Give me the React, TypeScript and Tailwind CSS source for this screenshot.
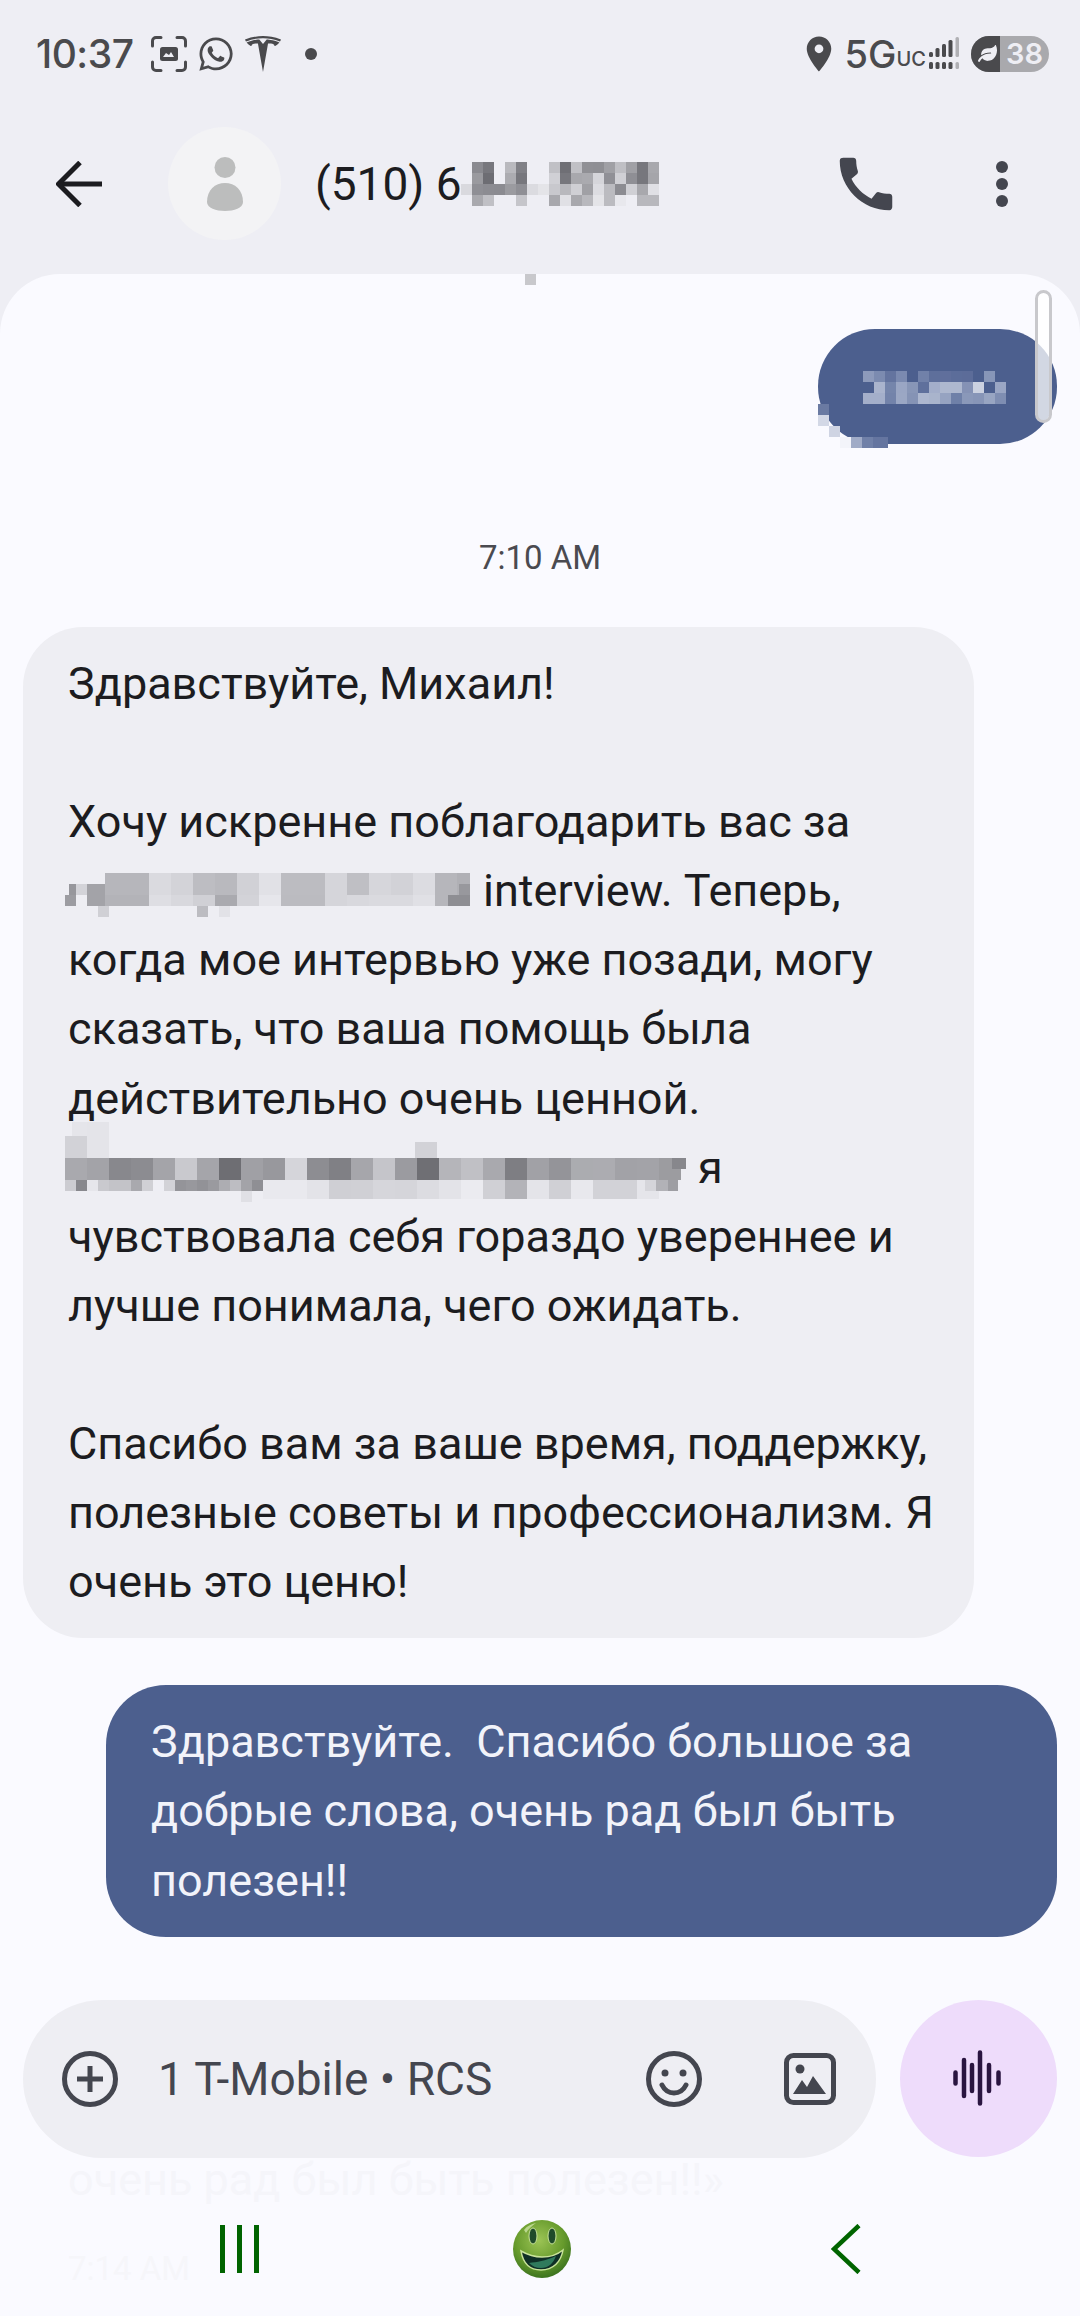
import React from 'react'
import { FaWhatsapp, FaLeaf } from 'react-icons/fa'
import { SiTesla } from 'react-icons/si'
import { MdCall, MdLocationOn } from 'react-icons/md'

type Cell = [number, number, number, number, string]

// censored areas of the screenshot, [x, y, w, h, colour] in page pixels
const row = (x: number, y: number, w: number, h: number, colors: string[]): Cell[] =>
  colors.map((c, i) => [x + i * w, y, w, h, c] as Cell)

const nameCells: Cell[] = [
  ...row(461, 163, 11, 11, ['#eeeef4', '#8a8a90', '#77777d', '#eeeef4', '#b9b9be', '#808086', '#eeeef4', '#eeeef4', '#c0c0c5', '#6f6f75', '#c0c0c5', '#909095', '#8f8f94', '#a0a0a5', '#bfbfc4', '#a0a0a5', '#77777d', '#a8a8ad']),
  ...row(461, 174, 11, 11, ['#eeeef4', '#9a9a9f', '#6d6d73', '#eeeef4', '#acacb1', '#77777d', '#eeeef4', '#eeeef4', '#d0d0d5', '#77777d', '#a8a8ad', '#aaaaaf', '#d5d5da', '#909096', '#d0d0d5', '#8f8f95', '#77777d', '#a5a5aa']),
  ...row(461, 185, 11, 11, ['#d9d9de', '#8f8f95', '#8c8c92', '#8b8b91', '#9b9ba0', '#8f8f95', '#dbdbe0', '#e4e4e8', '#c8c8cd', '#b8b8bd', '#cfcfd4', '#a0a0a5', '#dcdce1', '#bbbbc0', '#8c8c92', '#d0d0d5', '#a8a8ad', '#e0e0e5']),
  ...row(461, 196, 11, 11, ['#eeeef4', '#a9a9ae', '#c0c0c5', '#eeeef4', '#eeeef4', '#c5c5ca', '#eeeef4', '#eeeef4', '#a8a8ad', '#e0e0e5', '#a8a8ad', '#b8b8bd', '#e4e4e8', '#bbbbc0', '#e8e8ed', '#eeeef4', '#b8b8bd', '#b8b8bd']),
]

const smsCells: Cell[] = [
  ...row(863, 371, 11, 11, ['#8d9abb', '#7c8bb0', '#64749f', '#7b8ab0', '#4c5f8e', '#7181a9', '#5e6f9b', '#606f9c', '#5c6d9a', '#5c6c99', '#4c5f8e', '#8796b8', '#4c5f8e']),
  ...row(863, 382, 11, 11, ['#4c5f8e', '#aab4cd', '#7585ab', '#9aa6c4', '#8896b7', '#5f709c', '#a3aeca', '#aeb8cf', '#aeb8cf', '#8592b5', '#cbd1e0', '#4c5f8e', '#9aa6c4']),
  ...row(863, 393, 11, 11, ['#a4afca', '#a4afca', '#7383aa', '#9ba7c4', '#8593b5', '#adb7cf', '#a9b4cc', '#96a3c1', '#6f80a8', '#8a98b9', '#8795b7', '#98a5c2', '#7f8eb2']),
]

const smsCorner: Cell[] = [
  [818, 404, 11, 11, '#6a7aa2'],
  [818, 415, 11, 11, '#d3d8e6'],
  [818, 426, 11, 22, '#fafaff'],
  [829, 426, 11, 11, '#cfd4e3'],
  [829, 437, 11, 11, '#fafaff'],
  [840, 437, 11, 11, '#f3f4fa'],
  [851, 437, 11, 11, '#a0abc7'],
  [862, 437, 11, 11, '#7080a8'],
  [873, 437, 15, 11, '#6575a0'],
]

const firstCells: Cell[] = [
  ...row(105, 874, 22, 22, ['#b6b6bb', '#b6b6bb', '#dadadf', '#d3d3d8', '#bdbdc2', '#b9b9be', '#d1d1d6', '#e1e1e6', '#bcbcc1', '#bcbcc1', '#d5d5da', '#bfbfc4', '#d6d6db', '#d2d2d7', '#dcdce1', '#b6b6bb', '#b0b0b5']),
  ...row(105, 896, 22, 11, ['#b3b3b8', '#b3b3b8', '#dedee3', '#d8d8dd', '#d0d0d5', '#aaaaaf', '#d3d3d8', '#e6e6eb', '#bbbbc0', '#bbbbc0', '#d5d5da', '#d8d8dd', '#dadadf', '#dadadf', '#e0e0e5', '#b6b6bb', '#c2c2c7']),
  [65, 896, 11, 11, '#9c9ca1'],
  [69, 885, 7, 11, '#97979c'],
  [76, 885, 11, 11, '#d3d3d8'],
  [87, 885, 18, 22, '#a3a3a8'],
  [98, 907, 11, 11, '#d0d0d5'],
  [197, 907, 11, 11, '#bcbcc1'],
  [219, 907, 11, 11, '#e2e2e7'],
  [459, 885, 11, 11, '#98989d'],
  [448, 896, 22, 11, '#8e8e93'],
]

const secondCells: Cell[] = [
  [65, 1136, 22, 22, '#d2d2d7'],
  [87, 1122, 22, 36, '#e4e4e9'],
  [72, 1122, 15, 14, '#e5e5ea'],
  [415, 1142, 22, 16, '#d2d2d7'],
  ...row(65, 1158, 22, 22, ['#a9a9ae', '#a3a3a8', '#88888d', '#8c8c91', '#a4a4a9', '#c9c9ce', '#a5a5aa', '#6e6e73', '#a0a0a5', '#98989d', '#d5d5da', '#8d8d92', '#808085', '#a6a6ab', '#c5c5ca', '#9b9ba0', '#6f6f74', '#b5b5ba', '#c0c0c5', '#a9a9ae', '#7e7e83', '#a1a1a6', '#949499', '#abacb0', '#acacb1', '#a2a2a7', '#a3a3a8', '#9c9ca0']),
  [672, 1158, 14, 11, '#87878c'],
  ...row(65, 1180, 11, 11, ['#ccccd1', '#88888d', '#e6e6eb', '#c9c9ce', '#c3c3c8', '#c3c3c8', '#a9a9ae', '#d0d0d5', '#eeeef4', '#d2d2d7', '#949499', '#98989d', '#929297', '#9a9a9f', '#adadb2', '#bdbdc2', '#a3a3a8', '#8f8f94']),
  [241, 1191, 11, 11, '#e0e0e5'],
  ...row(263, 1180, 22, 19, ['#e9e9ee', '#e9e9ee', '#e3e3e8', '#cfcfd4', '#d0d0d5', '#d6d6db', '#d5d5da', '#dcdce1', '#e3e3e8', '#ebebf0', '#d0d0d5', '#b3b3b8', '#e4e4e9', '#d0d0d5', '#e8e8ed', '#d2d2d7', '#d2d2d7', '#e5e5ea']),
  [645, 1180, 11, 11, '#d5d5da'],
  [656, 1180, 12, 11, '#b2b2b7'],
  [668, 1180, 10, 11, '#9e9ea3'],
]

const Mosaic = ({ cells, x, y, w, h, className }: { cells: Cell[]; x: number; y: number; w: number; h: number; className?: string }) => (
  <svg width={w} height={h} viewBox={`${x} ${y} ${w} ${h}`} shapeRendering="crispEdges" className={className}>
    {cells.map(([cx, cy, cw, ch, fill], i) => (
      <rect key={i} x={cx} y={cy} width={cw} height={ch} fill={fill} />
    ))}
  </svg>
)

const StatusBar = () => (
  <div className="flex h-[105px] shrink-0 items-center justify-between pl-[36px] pr-[31px] pt-[2px] font-['Inter',sans-serif] text-[#4a4a4d]">
    <div className="flex items-center">
      <span className="text-[39px] font-medium leading-none tracking-[-0.5px]">10:37</span>
      <svg width="36" height="36" viewBox="0 0 36 36" fill="none" className="ml-[18px]">
        <path d="M1.5 10V5a3.500 3.500 0 0 1 3.500-3.500h5M26 1.500h5A3.500 3.500 0 0 1 34.500 5v5M34.500 26v5a3.500 3.500 0 0 1-3.500 3.500h-5M10 34.500H5A3.500 3.500 0 0 1 1.500 31v-5" stroke="#4a4a4d" strokeWidth="3" strokeLinecap="round" />
        <rect x="9" y="11" width="18" height="14" rx="2.500" fill="#4a4a4d" />
        <path d="M12 21l3-4 3 2 2-3 3 5z" fill="#eeeef4" />
      </svg>
      <FaWhatsapp size={38} className="ml-[10px]" />
      <SiTesla size={36} className="ml-[10px]" />
      <div className="ml-[24px] h-[12px] w-[12px] rounded-full bg-[#4a4a4d]" />
    </div>
    <div className="flex items-center">
      <MdLocationOn size={42} className="mr-[5px]" />
      <span className="text-[38px] font-medium leading-none">5G</span>
      <span className="mt-[10px] text-[20px] font-medium leading-none">UC</span>
      <svg width="32" height="34" viewBox="0 0 32 34" className="ml-[3px]">
        <g fill="#4a4a4d">
          <rect x="0" y="15" width="4" height="5" rx="1.500" />
          <rect x="6.500" y="11" width="4" height="9" rx="1.500" />
          <rect x="13" y="7" width="4" height="13" rx="1.500" />
          <rect x="19.500" y="3" width="4" height="17" rx="1.500" />
          <rect x="0" y="25" width="4" height="7" rx="1.500" />
          <rect x="6.500" y="25" width="4" height="7" rx="1.500" />
          <rect x="13" y="25" width="4" height="7" rx="1.500" />
          <rect x="19.500" y="25" width="4" height="7" rx="1.500" />
        </g>
        <rect x="26.500" y="0" width="3.500" height="20" rx="1.500" fill="#b0b0b4" />
        <rect x="26.500" y="25" width="3.500" height="7" rx="1.500" fill="#b0b0b4" />
      </svg>
      <div className="ml-[10px] flex h-[36px] w-[78px] overflow-hidden rounded-full bg-[#a9a9ad]">
        <div className="flex w-[29px] items-center justify-center bg-[#4a4a4d] pl-[3px]">
          <FaLeaf size={19} className="text-[#eeeef4]" />
        </div>
        <span className="flex-1 text-center text-[29px] font-semibold leading-[36px] text-[#eeeef4]">38</span>
      </div>
    </div>
  </div>
)

const Header = () => (
  <div className="mb-[12px] flex h-[157px] shrink-0 items-center pr-[72px]">
    <svg width="46" height="46" viewBox="0 0 46 46" fill="none" className="ml-[56px]" stroke="#1c1c20" strokeWidth="5">
      <path d="M46 23H3" />
      <path d="M24 1.500L2.500 23 24 44.500" />
    </svg>
    <div className="ml-[66px] flex h-[113px] w-[113px] items-center justify-center rounded-full bg-[#f3f3f5]">
      <svg width="38" height="54" viewBox="0 0 38 54" fill="#bcbdbd">
        <ellipse cx="19" cy="10.500" rx="10.500" ry="10.500" />
        <path d="M19 26c10 0 18 7 18 19 0 6-9 9-18 9S1 51 1 45c0-12 8-19 18-19z" />
      </svg>
    </div>
    <span className="ml-[34px] w-[146px] shrink-0 whitespace-nowrap text-[46px] leading-none text-[#1c1c20]">(510) 6</span>
    <Mosaic cells={nameCells} x={461} y={163} w={198} h={44} className="shrink-0" />
    <MdCall size={70} className="ml-auto text-[#44464f]" />
    <div className="ml-[95px] flex flex-col gap-[5px]">
      <div className="h-[12px] w-[12px] rounded-full bg-[#44464f]" />
      <div className="h-[12px] w-[12px] rounded-full bg-[#44464f]" />
      <div className="h-[12px] w-[12px] rounded-full bg-[#44464f]" />
    </div>
  </div>
)

const Smiley = () => (
  <svg width="60" height="60" viewBox="0 0 60 60">
    <defs>
      <radialGradient id="ball" cx="45%" cy="35%" r="65%">
        <stop offset="0%" stopColor="#9cc455" />
        <stop offset="65%" stopColor="#669a2c" />
        <stop offset="100%" stopColor="#3d7420" />
      </radialGradient>
    </defs>
    <circle cx="30" cy="30" r="29" fill="url(#ball)" />
    <path d="M12 11c3-4 7-6 12-7-4 3-8 6-10 10z" fill="#d5ebb0" opacity="0.7" />
    <ellipse cx="21" cy="17" rx="4" ry="8" fill="#1f4a2a" stroke="#c8e39a" strokeWidth="1" />
    <ellipse cx="40" cy="17" rx="4" ry="8" fill="#1f4a2a" stroke="#c8e39a" strokeWidth="1" />
    <path d="M9 32c7 4 13 6 21 6s15-2 21-7c-2 12-10 20-22 20S11 44 9 32z" fill="#0f2f26" stroke="#c8e39a" strokeWidth="1.500" />
    <path d="M17 44c8-1 16-2 27-7-3 8-8 12-15 12-5 0-9-2-12-5z" fill="#2f7a5c" />
  </svg>
)

const NavBar = () => (
  <div className="absolute bottom-[42px] left-0 flex h-[50px] w-full items-center">
    <div className="ml-[220px] flex gap-[12px]">
      <div className="h-[48px] w-[5px] bg-[#006400]" />
      <div className="h-[48px] w-[5px] bg-[#006400]" />
      <div className="h-[48px] w-[5px] bg-[#006400]" />
    </div>
    <div className="ml-[253px]">
      <Smiley />
    </div>
    <svg width="30" height="50" viewBox="0 0 30 50" fill="none" stroke="#006400" strokeWidth="4.500" className="ml-[259px]">
      <path d="M28 1.500L3 25l25 23.500" />
    </svg>
  </div>
)

const Composer = () => (
  <div className="mt-[63px] flex gap-[24px]">
    <div className="flex h-[158px] w-[853px] items-center rounded-full bg-[#eeeef3] pr-[40px] text-[#44464f]">
      <svg width="56" height="56" viewBox="0 0 56 56" fill="none" stroke="currentColor" strokeWidth="5" className="ml-[39px]">
        <circle cx="28" cy="28" r="25.500" />
        <path d="M28 15v26M15 28h26" />
      </svg>
      <span className="ml-[40px] text-[46px] leading-none">1 T-Mobile • RCS</span>
      <svg width="56" height="56" viewBox="0 0 56 56" fill="none" stroke="currentColor" strokeWidth="5" className="ml-auto">
        <circle cx="28" cy="28" r="25.500" />
        <circle cx="19" cy="22" r="3.500" fill="currentColor" stroke="none" />
        <circle cx="37" cy="22" r="3.500" fill="currentColor" stroke="none" />
        <path d="M16 34c3 6 7 8 12 8s9-2 12-8" strokeLinecap="round" />
      </svg>
      <svg width="52" height="52" viewBox="0 0 52 52" fill="none" className="ml-[82px]">
        <rect x="2.500" y="2.500" width="47" height="47" rx="7" stroke="currentColor" strokeWidth="5" />
        <circle cx="16" cy="16" r="4.500" fill="currentColor" />
        <path d="M9 41l9-14 5 7 6-11 13 18z" fill="currentColor" />
      </svg>
    </div>
    <div className="flex h-[157px] w-[157px] items-center justify-center rounded-full bg-[#eedcfb]">
      <svg width="48" height="56" viewBox="0 0 48 56" stroke="#2a1540" strokeWidth="4.500" strokeLinecap="round" fill="none" className="mr-[4px]">
        <path d="M2.500 22.500v11M11 10v36M19 15v26M27 2.500v51M36 15v26M45.500 22.500v11" />
      </svg>
    </div>
  </div>
)

const App = () => (
  <div className="flex h-[2316px] w-[1080px] flex-col overflow-hidden bg-[#eeeef4] font-['Roboto',sans-serif]">
    <StatusBar />
    <Header />
    <div className="relative flex-1 overflow-hidden rounded-t-[60px] bg-[#fafaff] pl-[23px] pr-[23px]">
      <div className="absolute left-[525px] top-0 h-[11px] w-[11px] bg-[#c8c8cc]" />
      <div className="mt-[55px] flex justify-end">
        <div className="relative h-[115px] w-[239px] rounded-[57px] bg-[#4c5f8e]">
          <Mosaic cells={smsCells} x={863} y={371} w={143} h={33} className="absolute left-[45px] top-[42px]" />
          <Mosaic cells={smsCorner} x={818} y={404} w={70} h={44} className="absolute left-0 top-[75px]" />
        </div>
      </div>
      <div className="mt-[92px] text-center text-[33px] leading-[44px] text-[#4a4a50]">7:10 AM</div>
      <div className="mt-[47px] w-[951px] whitespace-nowrap rounded-[60px] bg-[#eeeef3] px-[45px] py-[22px] text-[45px] leading-[69.1px] text-[#1c1c20]">
        Здравствуйте, Михаил!
        <br />
        <br />
        Хочу искренне поблагодарить вас за
        <br />
        <span className="relative inline-block h-[40px] w-[415px]">
          <Mosaic cells={firstCells} x={65} y={874} w={405} h={44} className="absolute left-[-3px] top-[7px]" />
        </span>
        interview. Теперь,
        <br />
        когда мое интервью уже позади, могу
        <br />
        сказать, что ваша помощь была
        <br />
        действительно очень ценной.
        <br />
        <span className="relative inline-block h-[40px] w-[630px]">
          <Mosaic cells={secondCells} x={65} y={1122} w={625} h={80} className="absolute left-[-3px] top-[-21px]" />
        </span>
        я
        <br />
        чувствовала себя гораздо увереннее и
        <br />
        лучше понимала, чего ожидать.
        <br />
        <br />
        Спасибо вам за ваше время, поддержку,
        <br />
        полезные советы и профессионализм. Я
        <br />
        очень это ценю!
      </div>
      <div className="ml-[83px] mt-[47px] w-[951px] whitespace-pre-wrap rounded-[60px] bg-[#4c5f8e] px-[45px] py-[22px] text-[45px] leading-[69.1px] text-[#f2f3fa]">
        {'Здравствуйте.  Спасибо большое за'}
        <br />
        добрые слова, очень рад был быть
        <br />
        полезен!!
      </div>
      <Composer />
      <div className="ml-[45px] mt-[-3px] whitespace-nowrap text-[45px] leading-[50px] text-[#f5f5fa]">очень рад был быть полезен!!»</div>
      <div className="ml-[45px] mt-[44px] text-[33px] leading-[40px] text-[#f6f6fa]">7:14 AM</div>
      <NavBar />
      <div className="absolute left-[1035px] top-[16px] h-[133px] w-[17px] rounded-full border-[3px] border-[#c8c8cc] bg-white/75" />
    </div>
  </div>
)

export default App
